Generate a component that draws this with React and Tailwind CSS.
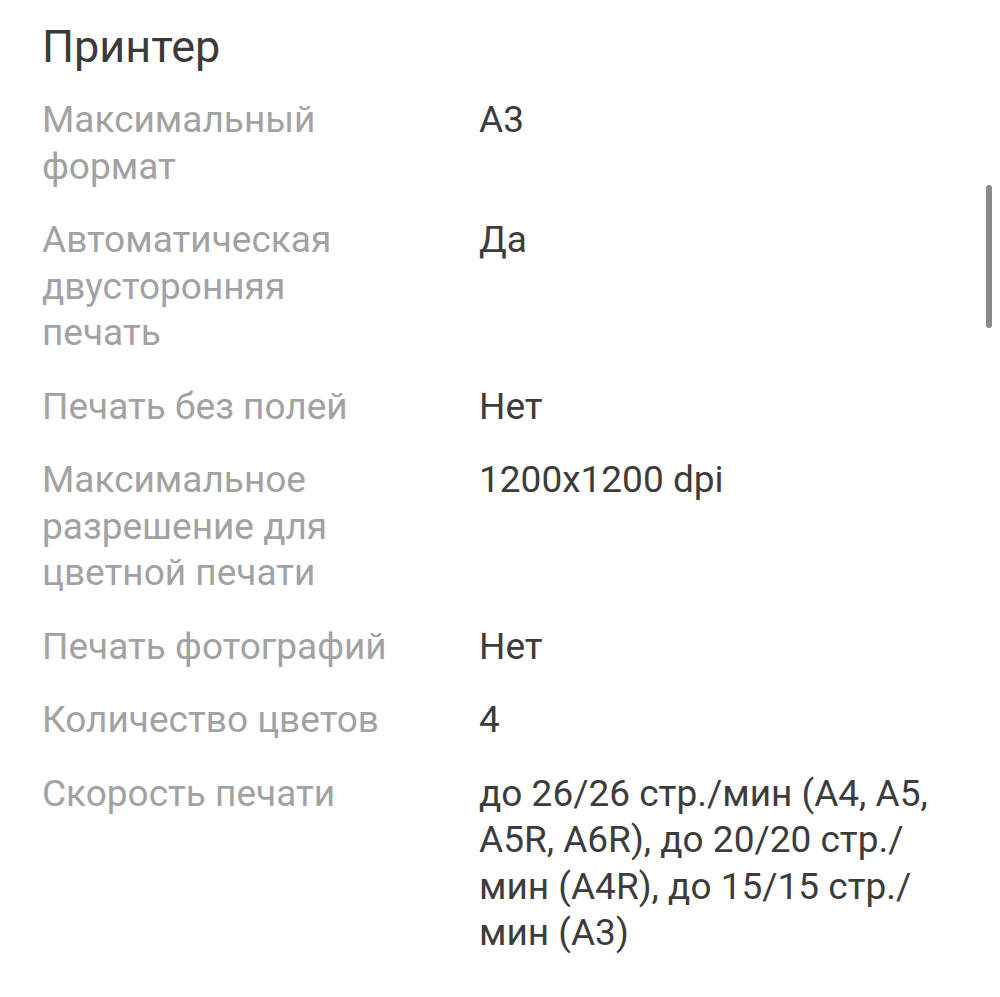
const rows = [
  { label: "Максимальный формат", value: "A3" },
  { label: "Автоматическая двусторонняя печать", value: "Да" },
  { label: "Печать без полей", value: "Нет" },
  {
    label: "Максимальное разрешение для цветной печати",
    value: "1200x1200 dpi",
  },
  { label: "Печать фотографий", value: "Нет" },
  { label: "Количество цветов", value: "4" },
  {
    label: "Скорость печати",
    value:
      "до 26/26 стр./мин (A4, A5, A5R, A6R), до 20/20 стр./мин (A4R), до 15/15 стр./мин (A3)",
  },
];

export default function App() {
  return (
    <div
      className="relative min-h-[997px] w-full bg-white"
      style={{ fontFamily: "Roboto, 'Noto Sans', sans-serif" }}
    >
      <div className="pl-[42px] pr-[40px] pt-[20px]">
        <h1 className="text-[45px] leading-[54px] text-[#3a3a3a]">Принтер</h1>

        <div className="mt-[23px] flex flex-col gap-[27px]">
          {rows.map((row) => (
            <div key={row.label} className="grid grid-cols-[360px_1fr] gap-x-[77px]">
              <div className="text-[37px] leading-[46.5px] text-[#a2a2a2]">
                {row.label}
              </div>
              <div className="text-[37px] leading-[46.5px] text-[#3c3c3c]">
                {row.value}
              </div>
            </div>
          ))}
        </div>
      </div>

      <div className="absolute right-[8px] top-[185px] h-[143px] w-[6px] rounded-full bg-[#8a8a8a]" />
    </div>
  );
}
